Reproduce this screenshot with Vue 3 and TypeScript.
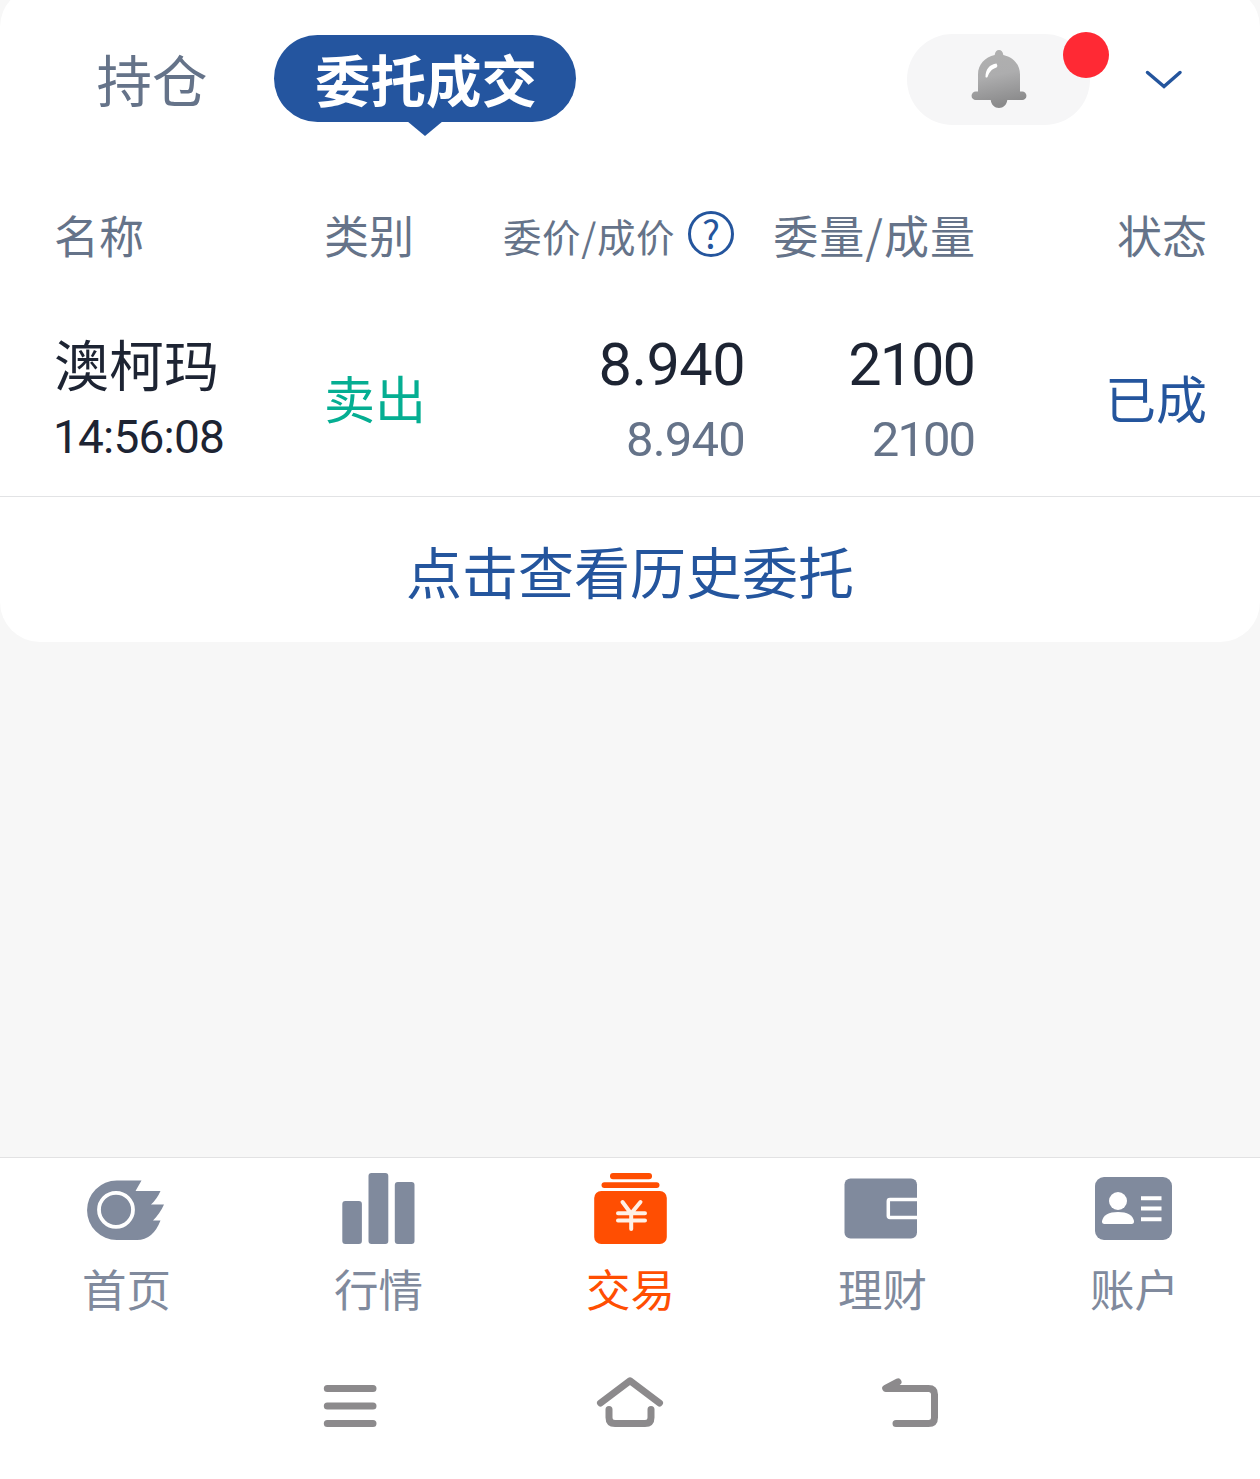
<script setup lang="ts">
import { ref } from 'vue'

interface Order {
  name: string
  time: string
  side: string
  orderPrice: string
  dealPrice: string
  orderQty: string
  dealQty: string
  status: string
}

const tabs = ['持仓', '委托成交']
const activeTab = ref(1)

const orders: Order[] = [
  {
    name: '澳柯玛',
    time: '14:56:08',
    side: '卖出',
    orderPrice: '8.940',
    dealPrice: '8.940',
    orderQty: '2100',
    dealQty: '2100',
    status: '已成',
  },
]

const navItems = [
  { id: 'home', label: '首页' },
  { id: 'quotes', label: '行情' },
  { id: 'trade', label: '交易' },
  { id: 'wealth', label: '理财' },
  { id: 'account', label: '账户' },
]
const activeNav = ref('trade')
</script>

<template>
  <div class="screen">
    <section class="card">
      <header class="toolbar">
        <button
          v-for="(tab, i) in tabs"
          :key="tab"
          class="tab"
          :class="{ active: i === activeTab }"
          @click="activeTab = i"
        >
          {{ tab }}
        </button>
        <div class="notice">
          <svg class="bell" viewBox="0 0 56 60" width="56" height="60">
            <defs>
              <linearGradient id="bellFill" x1="0" y1="0" x2="0.2" y2="1">
                <stop offset="0" stop-color="#b0b0b0" />
                <stop offset="0.5" stop-color="#adadae" />
                <stop offset="1" stop-color="#8b8b8c" />
              </linearGradient>
            </defs>
            <path
              fill="url(#bellFill)"
              d="M28 1c2.400 0 3.800 1.600 4.300 5C42 8 49 15.500 49 25.500v17h2.200a4.200 4.200 0 0 1 0 8.500H36.300c-.6 4.800-4 8-8.300 8s-7.700-3.200-8.300-8H4.800a4.200 4.200 0 0 1 0-8.500H7V25.500C7 15.500 14 8 23.700 6 24.200 2.600 25.600 1 28 1z"
            />
            <path d="M14.500 28C14.500 20 18.500 15.500 25.500 14.500Q27 16.500 25.500 18.500C20.500 20 18.500 23 16.500 28Q15.500 29 14.500 28z" fill="#fff" />
          </svg>
          <span class="dot"></span>
        </div>
        <svg class="chevron" viewBox="0 0 40 24" width="40" height="24">
          <path d="M4.500 4.500 21 18.500 37 4.500" fill="none" stroke="#24559d" stroke-width="3.500" stroke-linecap="round" />
        </svg>
      </header>

      <div class="grid head">
        <span>名称</span>
        <span>类别</span>
        <span class="price-head"><span class="small">委价/成价</span><i class="help">?</i></span>
        <span class="right qty-head">委量/成量</span>
        <span class="right">状态</span>
      </div>

      <div v-for="o in orders" :key="o.time" class="grid row">
        <div>
          <div class="main name">{{ o.name }}</div>
          <div class="time">{{ o.time }}</div>
        </div>
        <div class="side">{{ o.side }}</div>
        <div class="right">
          <div class="main num">{{ o.orderPrice }}</div>
          <div class="sub">{{ o.dealPrice }}</div>
        </div>
        <div class="right qty">
          <div class="main num">{{ o.orderQty }}</div>
          <div class="sub">{{ o.dealQty }}</div>
        </div>
        <div class="right status">{{ o.status }}</div>
      </div>

      <a class="history">点击查看历史委托</a>
    </section>

    <nav class="nav">
      <div
        v-for="item in navItems"
        :key="item.id"
        class="nav-item"
        :class="{ active: item.id === activeNav }"
        @click="activeNav = item.id"
      >
        <svg v-if="item.id === 'home'" viewBox="86 1172 80 74" width="80" height="74">
          <path
            fill="currentColor"
            d="M116.800 1180.500H141.500L135.500 1191H160.500Q157 1199 151 1204.500H164Q160 1213.500 153 1220.500H160.500Q153 1240 137 1240H116.800a29.750 29.750 0 0 1 0-59.500z"
          />
          <circle cx="116" cy="1209.800" r="17" fill="none" stroke="#fff" stroke-width="3.800" />
        </svg>
        <svg v-else-if="item.id === 'quotes'" viewBox="338 1172 80 74" width="80" height="74" fill="currentColor">
          <rect x="342.300" y="1201" width="19.600" height="43" rx="3" />
          <rect x="368.500" y="1173" width="19.800" height="71" rx="3" />
          <rect x="394.800" y="1182" width="19.700" height="62" rx="3" />
        </svg>
        <svg v-else-if="item.id === 'trade'" viewBox="590 1172 80 74" width="80" height="74" fill="currentColor">
          <rect x="610" y="1173" width="42" height="6.200" rx="3" />
          <rect x="601.500" y="1182.200" width="58" height="5.800" rx="2.900" />
          <rect x="594.200" y="1191" width="72.600" height="53" rx="7" />
          <path
            d="M622.500 1202 631 1213.500 640.500 1202M631.200 1213V1229M618 1213.300H645M618 1220.600H645"
            fill="none" stroke="#fff0e6" stroke-width="4" stroke-linecap="round"
          />
        </svg>
        <svg v-else-if="item.id === 'wealth'" viewBox="842 1172 80 74" width="80" height="74">
          <rect x="844.500" y="1178.500" width="72.500" height="60" rx="6" fill="currentColor" />
          <path d="M918 1199.500H890q-1.700 0-1.700 1.700v14.600q0 1.700 1.700 1.700H918" fill="none" stroke="#fff" stroke-width="3.500" />
        </svg>
        <svg v-else viewBox="1094 1172 80 74" width="80" height="74">
          <rect x="1095" y="1177" width="77" height="63" rx="9" fill="currentColor" />
          <circle cx="1118" cy="1201" r="9" fill="#fff" />
          <path d="M1102 1221q2-9 16-9t16 9q.3 3-2.500 3h-27q-2.800 0-2.500-3z" fill="#fff" />
          <path d="M1141 1198.200H1161.500M1141 1208.600H1161.500M1141 1219.200H1161.500" stroke="#fff" stroke-width="4" />
        </svg>
        <span class="nav-label">{{ item.label }}</span>
      </div>
    </nav>

    <footer class="system">
      <svg viewBox="320 1374 60 56" width="60" height="56">
        <path d="M327.300 1388.500H373M327.300 1406H373M327.300 1423.500H373" />
      </svg>
      <svg viewBox="595 1374 70 56" width="70" height="56">
        <path d="M600.500 1403 630 1380.800 659.500 1403M609 1409.500V1417.500q0 6 6 6H645q6 0 6-6V1409.500" />
      </svg>
      <svg viewBox="880 1374 60 56" width="60" height="56">
        <path d="M898 1381.800 885.700 1388.400H928.500q6 0 6 6V1417.500q0 6-6 6H896" />
      </svg>
    </footer>
  </div>
</template>

<style>
body {
  background: #f7f7f7;
}
</style>

<style scoped>
.screen {
  display: flex;
  flex-direction: column;
  height: 1479px;
  overflow: hidden;
  font-family: 'Noto Sans CJK SC', sans-serif;
  color: #1d2433;
  background: #f7f7f7;
}

.card {
  flex: none;
  box-sizing: border-box;
  height: 655px;
  margin-top: -13px;
  padding-top: 13px;
  border-radius: 40px;
  background: #fff;
}

.toolbar {
  display: flex;
  align-items: flex-start;
  height: 204px;
}

.tab {
  position: relative;
  height: 87px;
  margin: 35px 0 0;
  padding: 0;
  border: 0;
  background: none;
  font: inherit;
  font-size: 55.500px;
  line-height: 85px;
  color: #657389;
}

.tab:first-child {
  width: 112px;
  margin-left: 96px;
}

.tab.active {
  width: 302px;
  margin-left: 66px;
  padding-left: 2px;
  border-radius: 44px;
  background: #24559f;
  color: #fff;
  font-weight: 700;
}

.tab.active::after {
  content: '';
  position: absolute;
  left: 133px;
  top: 86px;
  border: 18px solid transparent;
  border-top: 15px solid #24559f;
  border-bottom: 0;
}

.notice {
  position: relative;
  display: flex;
  justify-content: center;
  width: 183px;
  height: 91px;
  margin: 34px 0 0 331px;
  border-radius: 46px;
  background: #f6f6f7;
}

.bell {
  margin-top: 15px;
}

.dot {
  position: absolute;
  left: 156px;
  top: -2px;
  width: 46px;
  height: 46px;
  border-radius: 50%;
  background: #ff2934;
}

.chevron {
  margin: 68px 0 0 53px;
}

.grid {
  display: grid;
  grid-template-columns: 270px 179px 242px 230px 232px;
  padding-left: 54px;
}

.head {
  height: 60px;
  line-height: 62px;
  font-size: 45px;
  color: #657389;
  white-space: nowrap;
}

.price-head {
  display: flex;
  align-items: center;
}

.small {
  font-size: 38.500px;
  letter-spacing: 0.6px;
}

.qty-head {
  margin-right: -1px;
  letter-spacing: 1px;
}

.help {
  box-sizing: border-box;
  width: 46px;
  height: 46px;
  margin: 0 0 2px 13px;
  border: 3.500px solid #24559d;
  border-radius: 50%;
  color: #24559d;
  font-size: 38px;
  font-style: normal;
  line-height: 38px;
  text-align: center;
}

.right {
  text-align: right;
}

.row {
  box-sizing: border-box;
  height: 233px;
  padding-top: 65px;
  border-bottom: 1px solid #e2e3e5;
}

.main {
  height: 66px;
  line-height: 66px;
}

.name {
  font-size: 55px;
}

.num,
.sub,
.time {
  font-family: Roboto, 'Noto Sans CJK SC', sans-serif;
}

.num {
  font-size: 59.500px;
  line-height: 72px;
  letter-spacing: -0.600px;
}

.time {
  margin-left: -1px;
  font-size: 46px;
  line-height: 84px;
  letter-spacing: -0.800px;
}

.sub {
  font-size: 49px;
  line-height: 90px;
  letter-spacing: -0.800px;
  color: #657389;
}

.qty .num,
.qty .sub {
  letter-spacing: -2px;
  margin-right: 1px;
}

.side,
.status {
  font-size: 51px;
  line-height: 136px;
}

.side {
  color: #05ae92;
}

.status {
  color: #24559d;
}

.history {
  display: block;
  text-align: center;
  font-size: 56px;
  line-height: 145px;
  color: #24559d;
}

.nav {
  display: flex;
  flex: none;
  height: 180px;
  margin-top: auto;
  border-top: 1px solid #e2e2e3;
  background: #fff;
}

.nav-item {
  display: flex;
  flex: 1;
  flex-direction: column;
  align-items: center;
  padding-top: 14px;
  color: #808a9d;
}

.nav-item.active {
  color: #ff4e02;
}

.nav-label {
  margin-top: 12px;
  padding-left: 1px;
  font-size: 44.500px;
  line-height: 60px;
}

.system {
  display: flex;
  flex: none;
  gap: 215px;
  box-sizing: border-box;
  height: 141px;
  padding: 36px 0 0 320px;
  background: #fff;
}

.system path {
  fill: none;
  stroke: #8c8a8c;
  stroke-width: 7px;
  stroke-linecap: round;
  stroke-linejoin: round;
}
</style>
